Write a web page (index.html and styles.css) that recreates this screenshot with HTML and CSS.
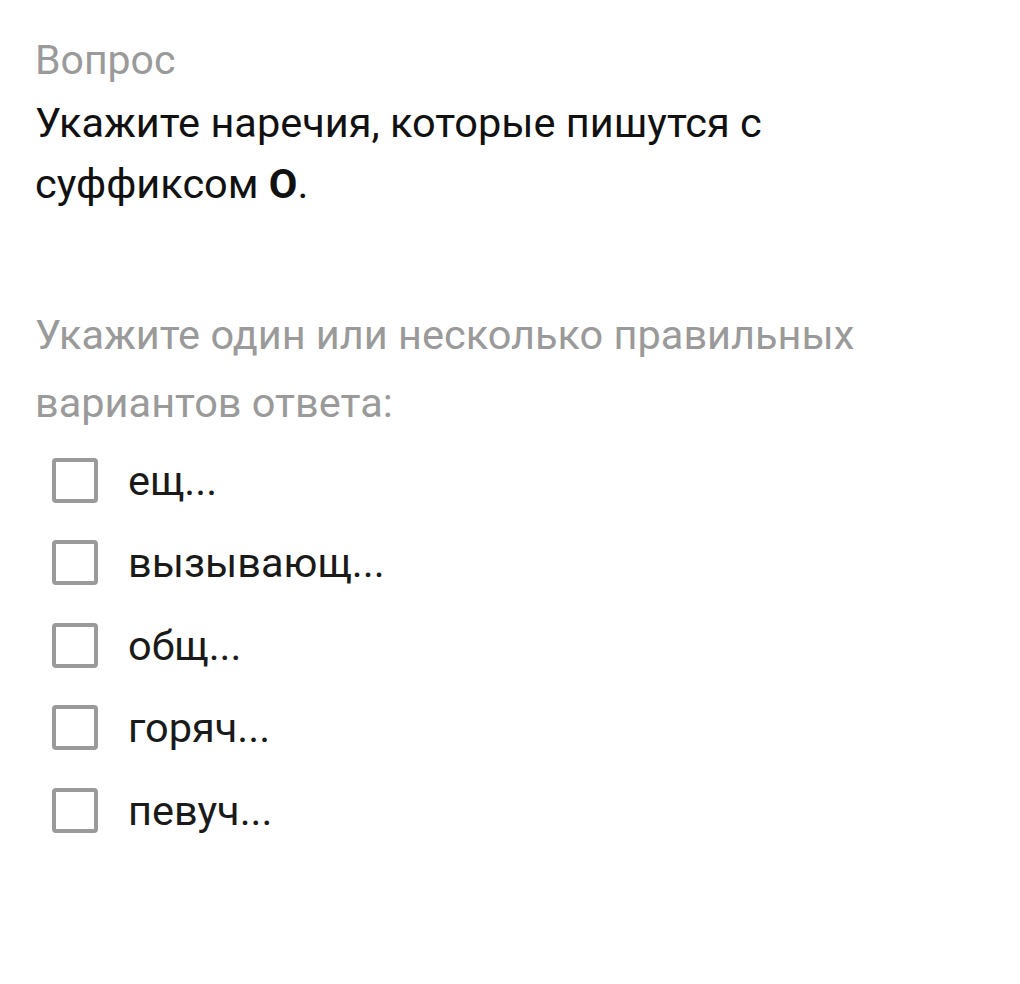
FILE: index.html
```html
<!DOCTYPE html>
<html lang="ru">

<head>
  <meta charset="UTF-8">
  <meta name="viewport" content="width=device-width, initial-scale=1">
  <title>Вопрос</title>
  <link rel="stylesheet" href="styles.css">
</head>

<body>
  <div class="vopros">
    <div class="zag">Вопрос</div>
    <div class="tekst">Укажите наречия, которые пишутся с суффиксом <b>О</b>.</div>
    <div class="podskazka">Укажите один или несколько правильных вариантов ответа:</div>
    <ul class="otvety">
      <li><span class="box"></span>ещ...</li>
      <li><span class="box"></span>вызывающ...</li>
      <li><span class="box"></span>общ...</li>
      <li><span class="box"></span>горяч...</li>
      <li><span class="box"></span>певуч...</li>
    </ul>
  </div>
</body>

</html>
```

FILE: styles.css
```css
body {
  margin: 0px;
  background-color: #FFFFFF;
  font-family: Roboto, "Noto Sans", sans-serif;
}

.vopros {
  padding: 36px 0 0 35px;
  width: 850px;
}

.zag {
  color: #9A9A9A;
  font-size: 41px;
  line-height: 48px;
}

.tekst {
  color: #111111;
  font-size: 41.5px;
  line-height: 61px;
  margin-top: 8px;
}

.tekst b {
  font-weight: bold;
}

.podskazka {
  color: #9A9A9A;
  font-size: 41.5px;
  line-height: 68px;
  margin-top: 87px;
}

.otvety {
  list-style: none;
  margin: 2px 0 0 0;
  padding: 0 0 0 17px;
}

.otvety li {
  display: flex;
  align-items: center;
  height: 82.5px;
  font-size: 41.5px;
  color: #1A1A1A;
}

.box {
  box-sizing: border-box;
  width: 46px;
  height: 45px;
  border: 4px solid #9A9A9A;
  border-radius: 4px;
  margin-right: 30px;
}
```
